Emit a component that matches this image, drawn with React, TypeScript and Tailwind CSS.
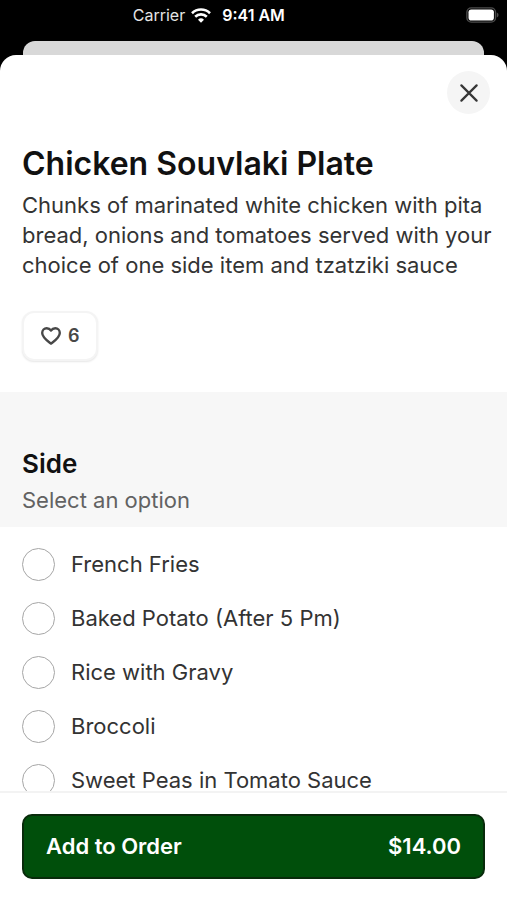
import { useState } from 'react';

const OPTIONS = [
  'French Fries',
  'Baked Potato (After 5 Pm)',
  'Rice with Gravy',
  'Broccoli',
  'Sweet Peas in Tomato Sauce',
];

function WifiIcon() {
  return (
    <svg viewBox="0 0 20 15" className="h-[15px] w-5" fill="none" stroke="white" strokeWidth="2.6" aria-hidden="true">
      <path d="M1 5.2a12.9 12.9 0 0 1 18 0" />
      <path d="M4.2 8.7a8.3 8.3 0 0 1 11.6 0" />
      <path d="M10 14.8 7 11.7a4.3 4.3 0 0 1 6 0Z" fill="white" stroke="none" />
    </svg>
  );
}

function BatteryIcon() {
  return (
    <svg viewBox="0 0 33 16" className="h-4 w-[33px]" fill="none" aria-hidden="true">
      <rect x="0.9" y="0.9" width="28.6" height="14.2" rx="4.4" stroke="#4c4c4c" strokeWidth="1.4" />
      <rect x="2.5" y="2.5" width="25.4" height="11" rx="2.8" fill="white" />
      <path d="M30.8 5.6c1.1.4 1.7 1.3 1.7 2.4s-.6 2-1.7 2.4Z" fill="#4c4c4c" />
    </svg>
  );
}

function StatusBar() {
  return (
    <div className="grid h-[41px] shrink-0 grid-cols-[1fr_auto_1fr] items-start pt-1 text-base leading-[22px] text-white">
      <div className="flex items-center justify-end gap-[6px] pr-[11px] text-neutral-200">
        <span>Carrier</span>
        <WifiIcon />
      </div>
      <span className="font-semibold">9:41 AM</span>
      <div className="flex h-[22px] items-center justify-end pr-2">
        <BatteryIcon />
      </div>
    </div>
  );
}

/** Outlined like button with its count. */
function LikeButton({ count }: { count: number }) {
  return (
    <button
      type="button"
      aria-label={`Like, ${count} likes`}
      className="mt-[31px] flex h-[50px] items-center gap-[6px] rounded-xl border-2 border-[#f4f4f4] bg-white px-4 text-lg font-semibold text-[#484848] shadow-[0_1px_2px_rgba(0,0,0,0.1)]"
    >
      <svg viewBox="0 0 24 24" className="size-[22px]" fill="none" stroke="currentColor" strokeWidth="2.6" strokeLinejoin="round" aria-hidden="true">
        <path d="M12 20.4C9.3 18.2 2.4 13.7 2.4 8.7c0-3 2.2-5.1 4.9-5.1 2 0 3.7 1 4.7 2.4 1-1.4 2.7-2.4 4.7-2.4 2.7 0 4.9 2.1 4.9 5.1 0 5-6.9 9.5-9.6 11.7Z" />
      </svg>
      {count}
    </button>
  );
}

export default function App() {
  const [selected, setSelected] = useState('');

  return (
    <div className="flex h-dvh flex-col overflow-hidden bg-black font-['Inter',sans-serif]">
      <StatusBar />
      <div className="mx-[23px] h-[14px] shrink-0 rounded-t-[12px] bg-[#d8d8d8]" />

      <main className="flex min-h-0 flex-1 flex-col overflow-hidden rounded-t-[16px] bg-white">
        <div className="min-h-0 flex-1 overflow-hidden">
          <section className="px-[22px] pb-[31px] pt-4">
            <div className="-mr-[5px] flex justify-end">
              <button
                type="button"
                aria-label="Close"
                className="flex size-[43px] items-center justify-center rounded-full bg-[#f5f5f5] text-[#363636]"
              >
                <svg viewBox="0 0 18 18" className="size-[18px]" fill="none" stroke="currentColor" strokeWidth="2.2" strokeLinecap="round" aria-hidden="true">
                  <path d="M1.4 1.4 16.6 16.6M16.6 1.4 1.4 16.6" />
                </svg>
              </button>
            </div>
            <h1 className="mt-[30px] text-[32px] font-semibold leading-10 text-[#111]">Chicken Souvlaki Plate</h1>
            <p className="-mr-[14px] mt-[6px] text-[22px] leading-[30px] text-[#333]">
              Chunks of marinated white chicken with pita bread, onions and tomatoes served with your choice of one side item and tzatziki sauce
            </p>
            <LikeButton count={6} />
          </section>

          <fieldset>
            <legend className="w-full bg-[#f7f7f7] px-[22px] pb-3 pt-14">
              <span className="block text-[26px] font-semibold leading-8 text-[#111]">Side</span>
              <span className="mt-[5px] block text-[22px] leading-[30px] text-[#626262]">Select an option</span>
            </legend>
            <div className="pt-[10px]">
              {OPTIONS.map((option) => (
                <label key={option} className="flex h-[54px] items-center gap-4 px-[22px] text-[22px] text-[#333]">
                  <input
                    type="radio"
                    name="side"
                    value={option}
                    checked={selected === option}
                    onChange={() => setSelected(option)}
                    className="size-[33px] shrink-0 appearance-none rounded-full border border-[#a6a6a6] bg-white checked:border-8 checked:border-[#004f0b]"
                  />
                  {option}
                </label>
              ))}
            </div>
          </fieldset>
        </div>

        <footer className="shrink-0 border-t-2 border-[#f3f3f3] bg-white px-[22px] pb-[21px] pt-[21px]">
          <button
            type="button"
            className="flex h-[65px] w-full items-center justify-between rounded-[10px] border-2 border-[#082b0b] bg-[#004f0b] px-[22px] text-[22px] font-semibold text-white"
          >
            <span>Add to Order</span>
            <span>$14.00</span>
          </button>
        </footer>
      </main>
    </div>
  );
}
